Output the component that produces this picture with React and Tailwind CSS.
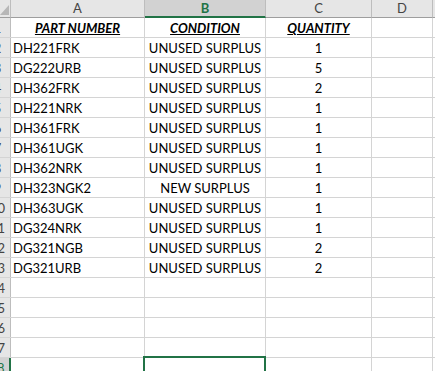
import React from 'react';

const rows = [
  ['DH221FRK', 'UNUSED SURPLUS', '1'],
  ['DG222URB', 'UNUSED SURPLUS', '5'],
  ['DH362FRK', 'UNUSED SURPLUS', '2'],
  ['DH221NRK', 'UNUSED SURPLUS', '1'],
  ['DH361FRK', 'UNUSED SURPLUS', '1'],
  ['DH361UGK', 'UNUSED SURPLUS', '1'],
  ['DH362NRK', 'UNUSED SURPLUS', '1'],
  ['DH323NGK2', 'NEW SURPLUS', '1'],
  ['DH363UGK', 'UNUSED SURPLUS', '1'],
  ['DG324NRK', 'UNUSED SURPLUS', '1'],
  ['DG321NGB', 'UNUSED SURPLUS', '2'],
  ['DG321URB', 'UNUSED SURPLUS', '2'],
];

const cell = 'h-full flex items-center pt-[2px] border-r border-[#d4d4d4] shrink-0 whitespace-nowrap overflow-hidden';

const RowHead = ({ n, selected }) => (
  <div
    className={`w-[26px] -ml-[15px] h-full shrink-0 flex items-center justify-center pt-[2px] text-[13px] border-r ${
      selected
        ? 'bg-[#d2d2d2] text-[#217346] border-[#217346] border-r-2'
        : 'bg-[#e6e6e6] text-[#444] border-[#bdbdbd]'
    }`}
  >
    {n}
  </div>
);

export default function App() {
  const empty = [14, 15, 16, 17, 18];
  return (
    <div
      className="w-[435px] h-[371px] overflow-hidden bg-white text-black"
      style={{ fontFamily: 'Lato, "Liberation Sans", sans-serif' }}
    >
      {/* Column header */}
      <div className="flex h-[18px] bg-[#e6e6e6] text-[#444] text-[13px]">
        <div className="w-[11px] h-full shrink-0 border-r border-b border-[#9e9e9e] border-r-[#bdbdbd]">
          <svg width="10" height="17" viewBox="0 0 10 17">
            <polygon points="9,5 9,15 0,15" fill="#b7b7b7" />
          </svg>
        </div>
        <div className="w-[134px] h-full shrink-0 flex items-center justify-center pt-[1px] border-r border-b border-[#bdbdbd] border-b-[#9e9e9e]">
          A
        </div>
        <div className="w-[121px] h-full shrink-0 flex items-center justify-center pt-[1px] border-r border-[#bdbdbd] bg-[#d2d2d2] border-b-2 border-b-[#217346] text-[#217346] font-bold">
          B
        </div>
        <div className="w-[106px] h-full shrink-0 flex items-center justify-center pt-[1px] border-r border-b border-[#bdbdbd] border-b-[#9e9e9e]">
          C
        </div>
        <div className="w-[61px] h-full shrink-0 flex items-center justify-center pt-[1px] border-r border-b border-[#bdbdbd] border-b-[#9e9e9e]">
          D
        </div>
        <div className="flex-1 h-full border-b border-[#9e9e9e]" />
      </div>

      {/* Title row */}
      <div className="flex h-[20px] text-[13px] border-b border-[#d4d4d4]">
        <RowHead n={1} />
        <div className={`${cell} w-[134px] justify-center font-bold italic underline`}>PART NUMBER</div>
        <div className={`${cell} w-[121px] justify-center font-bold italic underline`}>CONDITION</div>
        <div className={`${cell} w-[106px] justify-center font-bold italic underline`}>QUANTITY</div>
        <div className={`${cell} w-[61px]`} />
      </div>

      {rows.map((r, i) => (
        <div key={i} className="flex h-[20px] text-[13px] border-b border-[#d4d4d4]">
          <RowHead n={i + 2} />
          <div className={`${cell} w-[134px] pl-[2px]`}>{r[0]}</div>
          <div className={`${cell} w-[121px] justify-center`}>{r[1]}</div>
          <div className={`${cell} w-[106px] justify-center`}>{r[2]}</div>
          <div className={`${cell} w-[61px]`} />
        </div>
      ))}

      {empty.map((n) => (
        <div key={n} className="flex h-[20px] text-[13px] border-b border-[#d4d4d4]">
          <RowHead n={n} selected={n === 18} />
          <div className={`${cell} w-[134px]`} />
          <div className="h-full flex items-center border-r border-[#d4d4d4] shrink-0 w-[121px] relative">
            {n === 18 && (
              <div className="absolute -left-[2px] -top-[2px] w-[123px] h-[22px] border-2 border-[#217346]" />
            )}
          </div>
          <div className={`${cell} w-[106px]`} />
          <div className={`${cell} w-[61px]`} />
        </div>
      ))}
    </div>
  );
}
